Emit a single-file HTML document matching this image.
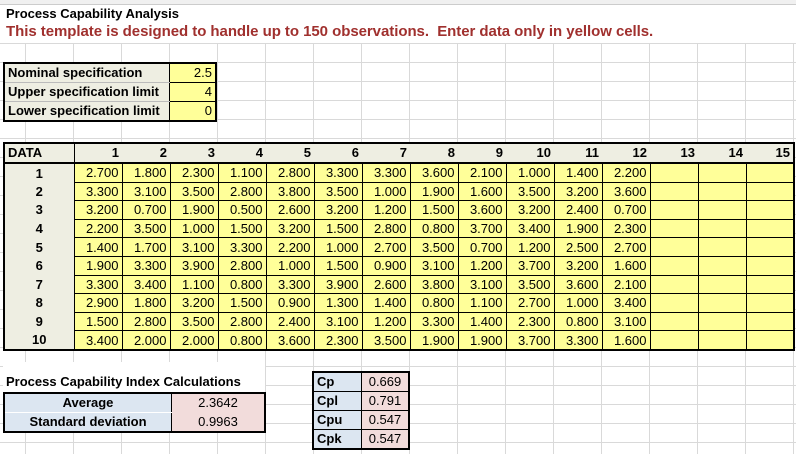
<!DOCTYPE html>
<html><head><meta charset="utf-8"><style>
body{margin:0;width:796px;height:454px;overflow:hidden;background:#fff;font-family:"Liberation Sans",Arial,sans-serif;position:relative}
.grid{position:absolute;left:0;top:0;width:796px;height:454px;
background-image:linear-gradient(to right,#d9d9d9 1px,transparent 1px),linear-gradient(to bottom,#d9d9d9 1px,transparent 1px);
background-size:48px 19px;background-position:25px 5px}
.abs{position:absolute}
table{border-collapse:collapse;position:absolute;table-layout:fixed}
td{padding:0 3px;height:18px;font-size:13px;white-space:nowrap;overflow:hidden;line-height:18px}
.b{font-weight:bold}
</style></head><body>
<div class="grid"></div>
<div class="abs" style="left:0;top:0;width:796px;height:4px;background:#f0f0f0;border-bottom:1px solid #ccc"></div>
<div class="abs" style="left:0;top:5px;width:796px;height:38px;background:#fff"></div>
<div class="abs b" style="left:6px;top:6px;font-size:13px">Process Capability Analysis</div>
<div class="abs b" style="left:6px;top:23px;font-size:15px;color:#a0302e;letter-spacing:-0.05px">This template is designed to handle up to 150 observations.&nbsp; Enter data only in yellow cells.</div>

<table style="left:3px;top:62px;border:2px solid #000">
<tr><td class="b" style="width:158px;background:#eeeee2;border-bottom:1px solid #bbb">Nominal specification</td><td style="width:39px;background:#ffff99;text-align:right;border-left:1px solid #000;border-bottom:1px solid #000">2.5</td></tr>
<tr><td class="b" style="background:#eeeee2;border-bottom:1px solid #bbb">Upper specification limit</td><td style="background:#ffff99;text-align:right;border-left:1px solid #000;border-bottom:1px solid #000">4</td></tr>
<tr><td class="b" style="background:#eeeee2">Lower specification limit</td><td style="background:#ffff99;text-align:right;border-left:1px solid #000">0</td></tr>
</table>

<table id="d" style="left:3px;top:142px;border:2px solid #000;width:792px">
<colgroup><col style="width:70px"><col span="15" style="width:48px"></colgroup>
<tr style="background:#eeeee2" class="b"><td style="border-bottom:2px solid #000;border-right:1px solid #000">DATA</td>
<td style="text-align:right;border-bottom:2px solid #000">1</td><td style="text-align:right;border-bottom:2px solid #000">2</td><td style="text-align:right;border-bottom:2px solid #000">3</td><td style="text-align:right;border-bottom:2px solid #000">4</td><td style="text-align:right;border-bottom:2px solid #000">5</td><td style="text-align:right;border-bottom:2px solid #000">6</td><td style="text-align:right;border-bottom:2px solid #000">7</td><td style="text-align:right;border-bottom:2px solid #000">8</td><td style="text-align:right;border-bottom:2px solid #000">9</td><td style="text-align:right;border-bottom:2px solid #000">10</td><td style="text-align:right;border-bottom:2px solid #000">11</td><td style="text-align:right;border-bottom:2px solid #000">12</td><td style="text-align:right;border-bottom:2px solid #000">13</td><td style="text-align:right;border-bottom:2px solid #000">14</td><td style="text-align:right;border-bottom:2px solid #000">15</td></tr>
</table>
<script>
var rows=[
"2.700 1.800 2.300 1.100 2.800 3.300 3.300 3.600 2.100 1.000 1.400 2.200",
"3.300 3.100 3.500 2.800 3.800 3.500 1.000 1.900 1.600 3.500 3.200 3.600",
"3.200 0.700 1.900 0.500 2.600 3.200 1.200 1.500 3.600 3.200 2.400 0.700",
"2.200 3.500 1.000 1.500 3.200 1.500 2.800 0.800 3.700 3.400 1.900 2.300",
"1.400 1.700 3.100 3.300 2.200 1.000 2.700 3.500 0.700 1.200 2.500 2.700",
"1.900 3.300 3.900 2.800 1.000 1.500 0.900 3.100 1.200 3.700 3.200 1.600",
"3.300 3.400 1.100 0.800 3.300 3.900 2.600 3.800 3.100 3.500 3.600 2.100",
"2.900 1.800 3.200 1.500 0.900 1.300 1.400 0.800 1.100 2.700 1.000 3.400",
"1.500 2.800 3.500 2.800 2.400 3.100 1.200 3.300 1.400 2.300 0.800 3.100",
"3.400 2.000 2.000 0.800 3.600 2.300 3.500 1.900 1.900 3.700 3.300 1.600"];
var t=document.getElementById('d');
rows.forEach(function(r,i){var tr=t.insertRow();var c=tr.insertCell();c.textContent=i+1;c.className='b';c.style.cssText='background:#eeeee2;text-align:center;border-right:1px solid #000;height:17.6px;line-height:17px';
var v=r.split(' ');for(var k=0;k<15;k++){c=tr.insertCell();c.textContent=v[k]||'';c.style.cssText='background:#ffff99;text-align:right;border:1px solid #000;height:17.6px;line-height:17px';}});
</script>

<div class="abs" style="left:3px;top:362px;width:262px;height:30px;background:#fff"></div>
<div class="abs b" style="left:6px;top:374px;font-size:13px">Process Capability Index Calculations</div>
<table style="left:3px;top:392px;border:2px solid #000">
<tr><td class="b" style="width:160px;background:#dce6f1;text-align:center;border-bottom:1px solid #fff">Average</td><td style="width:86px;background:#f2dcdb;text-align:center;border-left:1px solid #000">2.3642</td></tr>
<tr><td class="b" style="background:#dce6f1;text-align:center">Standard deviation</td><td style="background:#f2dcdb;text-align:center;border-left:1px solid #000">0.9963</td></tr>
</table>
<table style="left:312px;top:371px;border:2px solid #000">
<tr><td class="b" style="width:41px;background:#dce6f1;border-right:1px solid #000;border-bottom:1px solid #000">Cp</td><td style="width:40px;background:#f2dcdb;text-align:center;border-bottom:1px solid #000">0.669</td></tr>
<tr><td class="b" style="background:#dce6f1;border-right:1px solid #000;border-bottom:1px solid #000">Cpl</td><td style="background:#f2dcdb;text-align:center;border-bottom:1px solid #000">0.791</td></tr>
<tr><td class="b" style="background:#dce6f1;border-right:1px solid #000;border-bottom:1px solid #000">Cpu</td><td style="background:#f2dcdb;text-align:center;border-bottom:1px solid #000">0.547</td></tr>
<tr><td class="b" style="background:#dce6f1;border-right:1px solid #000">Cpk</td><td style="background:#f2dcdb;text-align:center">0.547</td></tr>
</table>
</body></html>
